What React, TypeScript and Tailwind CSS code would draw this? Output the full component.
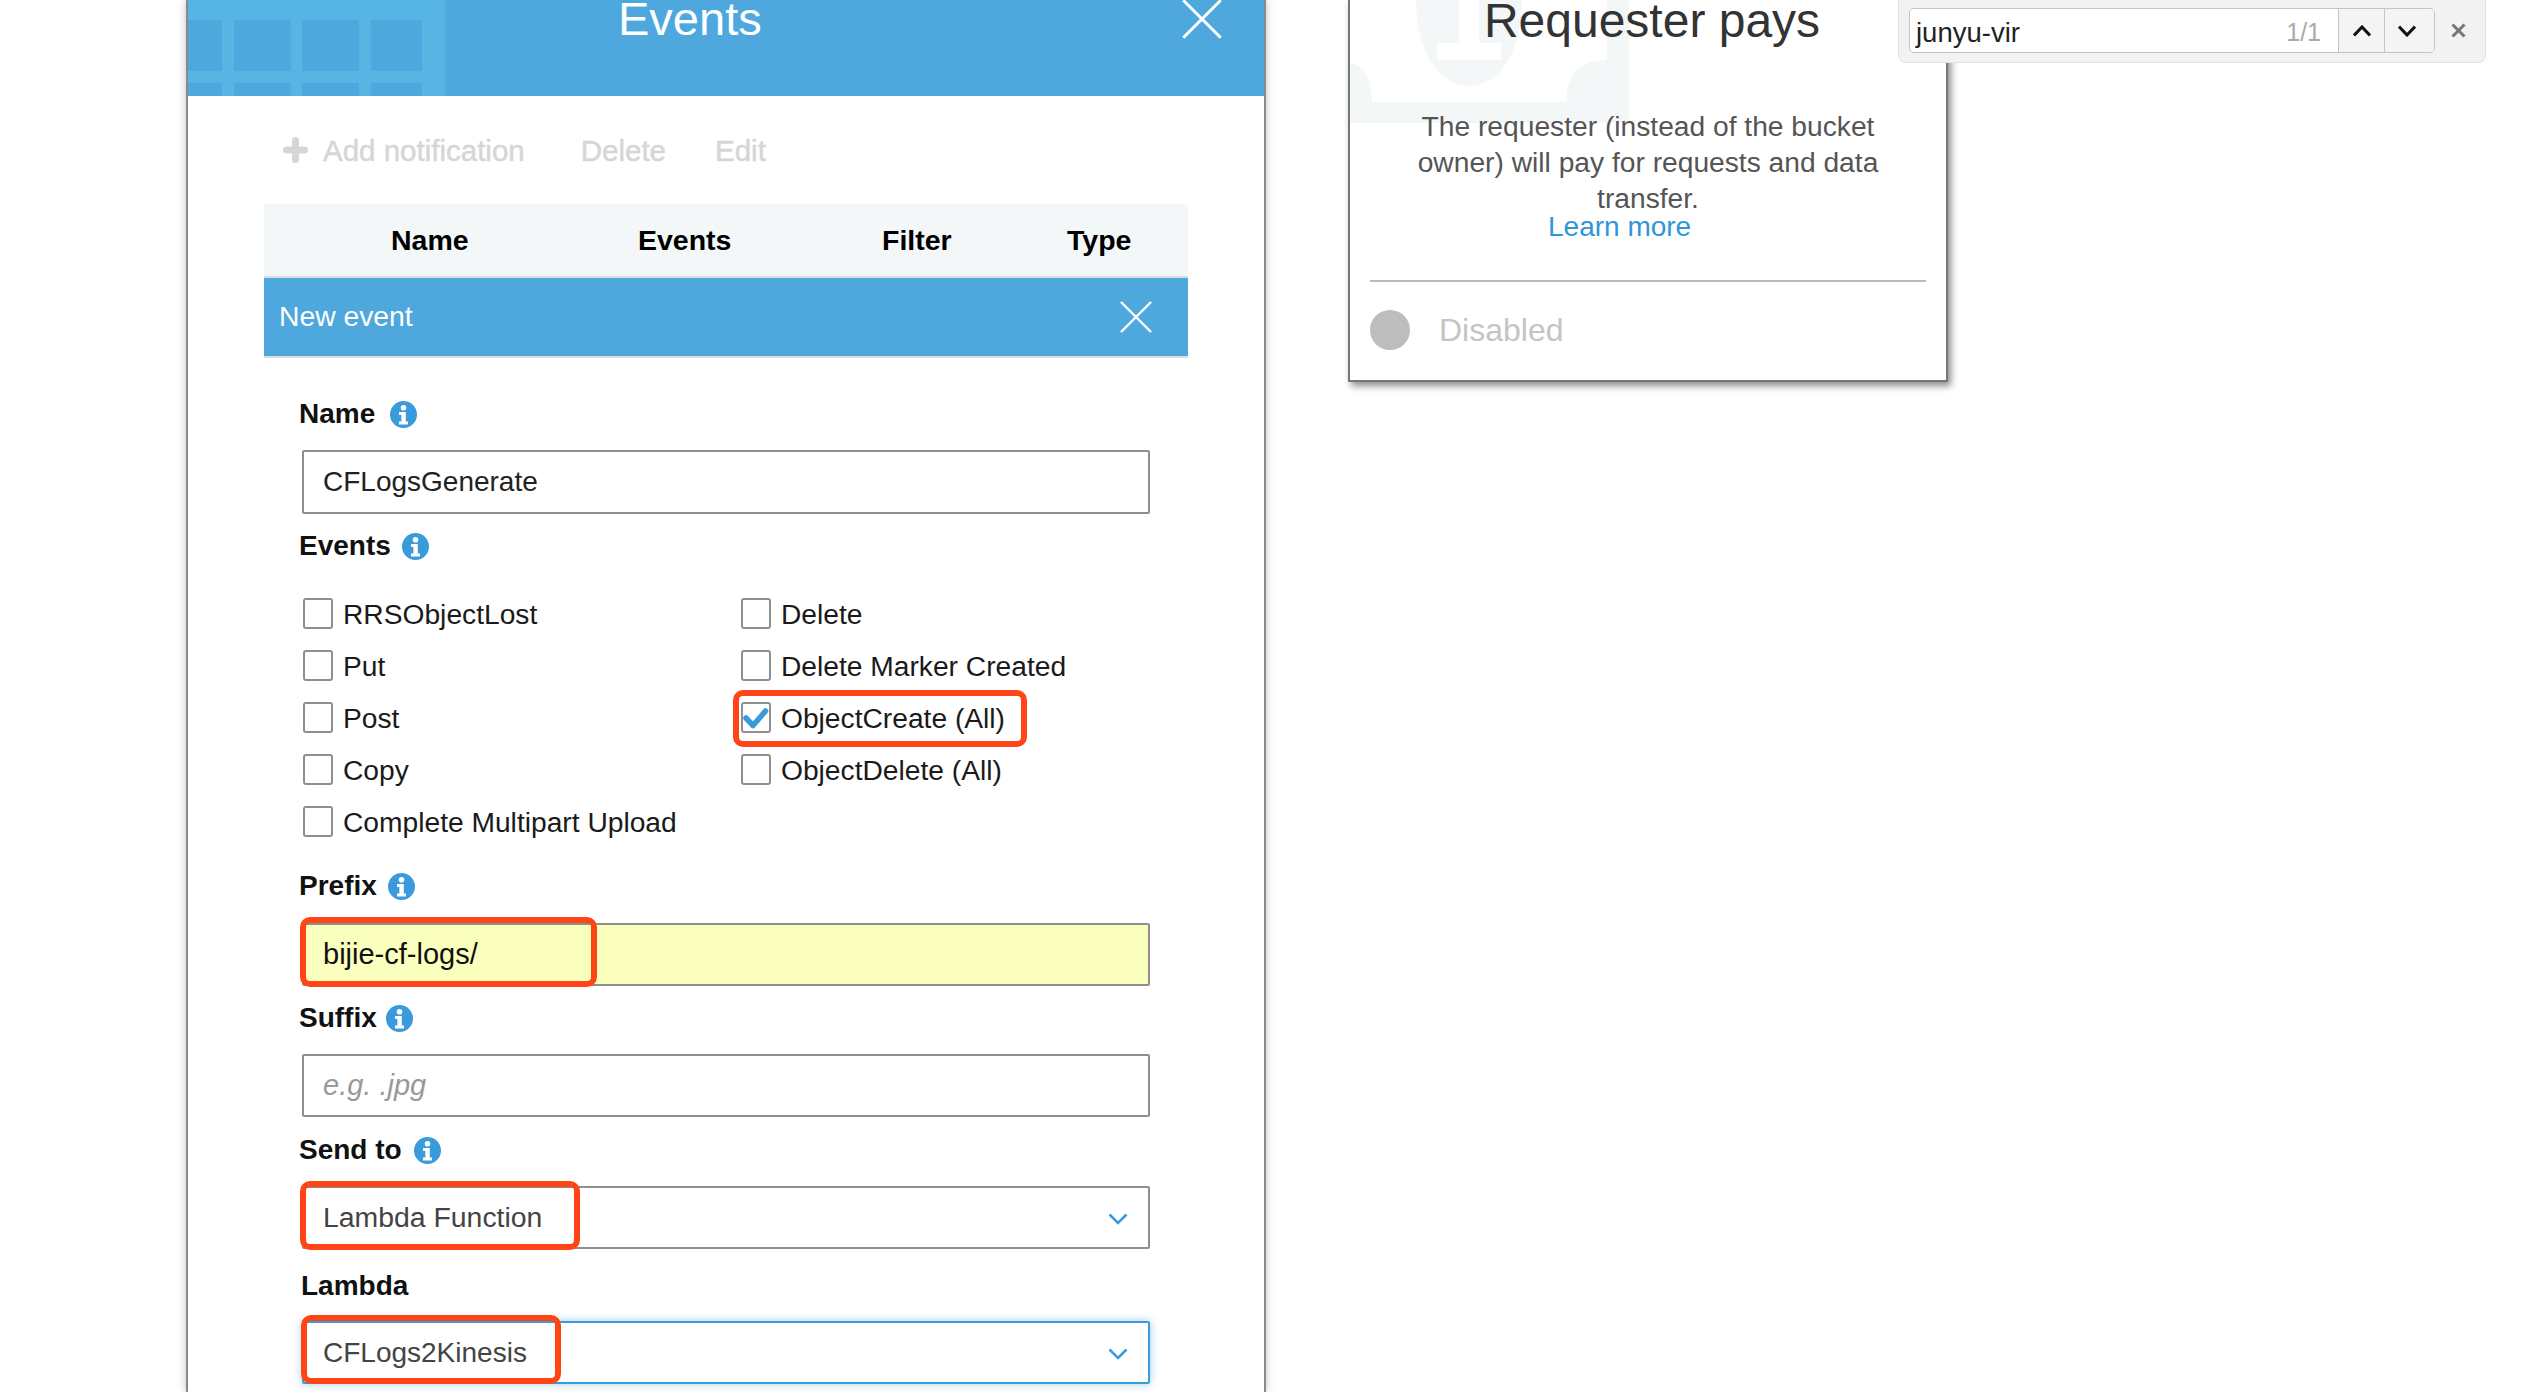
import React from "react";

const events = [
  ["RRSObjectLost", "Delete"],
  ["Put", "Delete Marker Created"],
  ["Post", "ObjectCreate (All)"],
  ["Copy", "ObjectDelete (All)"],
  ["Complete Multipart Upload", ""],
];

function CloseIcon({ size }: { size: number }) {
  return (
    <svg width={size} height={size} viewBox="0 0 32 32" className="shrink-0">
      <path d="M1 1 L31 31 M31 1 L1 31" stroke="#fff" strokeWidth="2.4" fill="none" />
    </svg>
  );
}

function InfoIcon({ className }: { className: string }) {
  return (
    <svg width="27" height="27" viewBox="0 0 27 27" className={`shrink-0 ${className}`}>
      <circle cx="13.5" cy="13.5" r="13.500" fill="#3a9bdc" />
      <circle cx="13.500" cy="6.800" r="2.800" fill="#fff" />
      <path d="M9 11h6.800v9.500H18v3H9v-3h2.400v-6.500H9z" fill="#fff" />
    </svg>
  );
}

function Chevron() {
  return (
    <svg width="20" height="12" viewBox="0 0 20 12" className="absolute right-[20px] top-[25px]">
      <path d="M1.500 1.500 L10 10 L18.500 1.500" stroke="#3a9bdc" strokeWidth="2.600" fill="none" />
    </svg>
  );
}

function Label({ text, iconClass }: { text: string; iconClass?: string }) {
  return (
    <div className="flex h-[32px] items-center text-[28px] font-bold text-[#111]">
      <span>{text}</span>
      {iconClass && <InfoIcon className={iconClass} />}
    </div>
  );
}

function Checkbox({ label, checked }: { label: string; checked?: boolean }) {
  return (
    <div className="relative flex h-[31px] items-center gap-[10px] text-[28.200px] text-[#1a1a1a]">
      <div className="relative h-[31px] w-[30px] shrink-0 rounded-[3px] border-2 border-[#8f8f8f] bg-white">
        {checked && (
          <svg width="30" height="31" viewBox="0 0 30 31" className="absolute left-[-2px] top-[-2px]">
            <path d="M5 16 L12 23.500 L24.500 9" stroke="#3a9bdc" strokeWidth="5.500" strokeLinecap="round" strokeLinejoin="round" fill="none" />
          </svg>
        )}
      </div>
      <span className="pt-[2px]">{label}</span>
      {checked && (
        <div className="absolute left-[-8px] top-[-12px] h-[57px] w-[294px] rounded-[10px] border-[6px] border-[#ff4415]" />
      )}
    </div>
  );
}

export default function App() {
  return (
    <div className="relative flex h-[1392px] w-[2544px] items-start overflow-hidden bg-white font-['Liberation_Sans',Arial,sans-serif]">
      {/* events modal */}
      <div className="ml-[186px] h-[1392px] w-[1080px] shrink-0 border-x-2 border-[#8a8a8a] bg-white shadow-[0_0_8px_rgba(0,0,0,0.25)]">
        <div className="relative flex h-[96px] items-start overflow-hidden bg-[#4ea8dd] text-white">
          <svg width="257" height="96" viewBox="0 0 257 96" className="shrink-0">
            <rect width="257" height="96" fill="#56b5e2" />
            <path d="M0 20h34v51H0zM46 20h57v51H46zM114 20h57v51h-57zM183 20h51v51h-51zM0 83h34v13H0zM46 83h57v13H46zM114 83h57v13h-57zM183 83h51v13h-51z" fill="#4ea8dd" />
          </svg>
          <div className="ml-[173px] text-[47px] leading-[37px]">Events</div>
          <div className="ml-auto mr-[42px] mt-[-1px]">
            <CloseIcon size={40} />
          </div>
        </div>

        <div className="px-[76px]">
          <div className="flex h-[108px] items-center text-[29.500px] text-[#d6d6d6] [-webkit-text-stroke:0.5px_#d6d6d6]">
            <svg width="25" height="26" viewBox="0 0 25 26" className="ml-[19px] shrink-0">
              <path d="M12.500 3.500 V22.500 M3.500 13 H21.500" stroke="#d6d6d6" strokeWidth="7" strokeLinecap="round" fill="none" />
            </svg>
            <span className="ml-[15px] pt-[3px]">Add notification</span>
            <span className="ml-[56px] pt-[3px]">Delete</span>
            <span className="ml-[49px] pt-[3px]">Edit</span>
          </div>

          <div className="grid h-[74px] grid-cols-[374px_244px_185px_1fr] items-center border-b-2 border-[#dcdcdc] bg-[#f4f7f8] text-[28.500px] font-bold text-black">
            <span className="pl-[127px]">Name</span>
            <span>Events</span>
            <span>Filter</span>
            <span>Type</span>
          </div>

          <div className="flex h-[80px] items-center justify-between border-b-2 border-[#dcdcdc] bg-[#4ea8dd] pl-[15px] pr-[36px] text-[28.300px] text-white">
            <span className="mt-[-1px]">New event</span>
            <CloseIcon size={32} />
          </div>

          <div className="pl-[35px] pr-[38px] pt-[40px]">
            <Label text="Name" iconClass="ml-[15px]" />
            <div className="ml-[3px] mt-[20px] flex h-[64px] items-center rounded-[2px] border-2 border-[#8f8f8f] pl-[19px] text-[28px] text-[#222]">
              CFLogsGenerate
            </div>

            <div className="mt-[16px]">
              <Label text="Events" iconClass="ml-[11px]" />
            </div>
            <div className="ml-[4px] mt-[36px] grid grid-cols-[438px_1fr] gap-y-[21px]">
              {events.map(([left, right]) => (
                <React.Fragment key={left}>
                  <Checkbox label={left} />
                  {right ? <Checkbox label={right} checked={right === "ObjectCreate (All)"} /> : <div />}
                </React.Fragment>
              ))}
            </div>

            <div className="mt-[33px]">
              <Label text="Prefix" iconClass="ml-[11px]" />
            </div>
            <div className="relative ml-[3px] mt-[21px] flex h-[63px] items-center rounded-[2px] border-2 border-[#8f8f8f] bg-[#faffbd] pl-[19px] text-[29px] text-[#111]">
              bijie-cf-logs/
              <div className="absolute left-[-4px] top-[-8px] h-[70px] w-[297px] rounded-[10px] border-[6px] border-[#ff4415]" />
            </div>

            <div className="mt-[16px]">
              <Label text="Suffix" iconClass="ml-[9px]" />
            </div>
            <div className="ml-[3px] mt-[20px] flex h-[63px] items-center rounded-[2px] border-2 border-[#8f8f8f] pl-[19px] text-[29px] italic text-[#999]">
              e.g. .jpg
            </div>

            <div className="mt-[17px]">
              <Label text="Send to" iconClass="ml-[12px]" />
            </div>
            <div className="relative ml-[3px] mt-[20px] flex h-[63px] items-center rounded-[2px] border-2 border-[#8f8f8f] pl-[19px] text-[28.400px] text-[#444]">
              Lambda Function
              <Chevron />
              <div className="absolute left-[-4px] top-[-7px] h-[69px] w-[280px] rounded-[10px] border-[6px] border-[#ff4415]" />
            </div>

            <div className="ml-[2px] mt-[21px]">
              <Label text="Lambda" />
            </div>
            <div className="relative ml-[3px] mt-[19px] flex h-[63px] items-center rounded-[2px] border-2 border-[#3a9bdc] pl-[19px] text-[28px] text-[#444] shadow-[0_0_8px_rgba(58,155,220,0.5)]">
              CFLogs2Kinesis
              <Chevron />
              <div className="absolute left-[-3px] top-[-8px] h-[69px] w-[260px] rounded-[10px] border-[6px] border-[#ff4415]" />
            </div>
          </div>
        </div>
      </div>

      {/* requester pays card */}
      <div className="relative ml-[82px] h-[382px] w-[600px] shrink-0 border-x-2 border-b-2 border-[#777] bg-white px-[20px] shadow-[3px_4px_7px_rgba(0,0,0,0.45)]">
        <svg width="279" height="123" viewBox="0 0 279 123" className="absolute left-0 top-0">
          <path d="M0 63 Q22 66 22 102 H216 Q216 60 257 60 V0 H279 V123 H0 Z" fill="#f4f7f8" />
          <path d="M66 0 H172 C172 50 150 86 119 86 C88 86 66 50 66 0 Z" fill="#f4f7f8" />
          <path d="M87 43h64v17H87zM109 0h20v45h-20z" fill="#fff" />
        </svg>
        <div className="relative flex h-[108px] justify-center pl-[8px]">
          <div className="text-[48px] leading-[41px] text-[#333]">Requester pays</div>
        </div>
        <div className="relative text-center text-[28.200px] leading-[36px] text-[#555]">
          The requester (instead of the bucket
          <br />
          owner) will pay for requests and data
          <br />
          transfer.
        </div>
        <div className="relative pl-[178px] text-[28px] leading-[22px] text-[#2f96d9]">Learn more</div>
        <div className="relative mt-[42px] h-[2px] bg-[#bbbbbb]" />
        <div className="mt-[24px] flex items-center gap-[29px]">
          <div className="h-[40px] w-[40px] rounded-full bg-[#bdbdbd]" />
          <span className="text-[32px] text-[#c4c4c4]">Disabled</span>
        </div>
      </div>

      {/* browser find bar */}
      <div className="absolute left-[1898px] top-0 flex h-[63px] w-[588px] items-start rounded-b-[8px] border border-t-0 border-[#e2e2e2] bg-[#f2f2f2] pl-[10px] pt-[8px]">
        <div className="flex h-[45px] w-[526px] overflow-hidden rounded-[5px] border border-[#c4c4c4] bg-white">
          <div className="flex flex-1 items-center justify-between pl-[6px] pr-[17px] pt-[4px] text-[27.500px]">
            <span className="text-[#222]">junyu-vir</span>
            <span className="text-[25px] text-[#aaa]">1/1</span>
          </div>
          <div className="flex w-[46px] items-center justify-center border-l border-[#c4c4c4] bg-[#f4f4f4]">
            <svg width="18" height="12" viewBox="0 0 18 12">
              <path d="M1 10.500 L9 2 L17 10.500" stroke="#111" strokeWidth="3" fill="none" />
            </svg>
          </div>
          <div className="flex w-[50px] items-center justify-center border-l border-[#c4c4c4] bg-[#f4f4f4] pr-[5px]">
            <svg width="18" height="12" viewBox="0 0 18 12">
              <path d="M1 1.500 L9 10 L17 1.500" stroke="#111" strokeWidth="3" fill="none" />
            </svg>
          </div>
        </div>
        <svg width="15" height="15" viewBox="0 0 15 15" className="ml-[16px] mt-[15px]">
          <path d="M1.500 1.500 L13.500 13.500 M13.500 1.500 L1.500 13.500" stroke="#777" strokeWidth="3" fill="none" />
        </svg>
      </div>
    </div>
  );
}
